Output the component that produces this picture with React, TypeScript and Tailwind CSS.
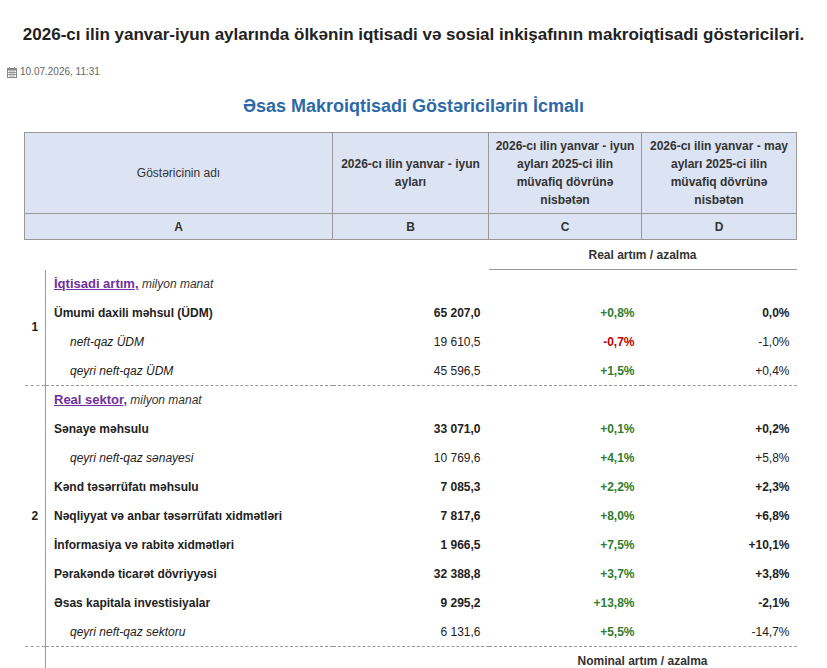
import React from "react";

type Row = {
  label: string;
  sub?: boolean;
  b: string;
  c: string;
  d: string;
};

const sectionOne: Row[] = [
  { label: "Ümumi daxili məhsul (ÜDM)", b: "65 207,0", c: "+0,8%", d: "0,0%" },
  { label: "neft-qaz ÜDM", sub: true, b: "19 610,5", c: "-0,7%", d: "-1,0%" },
  { label: "qeyri neft-qaz ÜDM", sub: true, b: "45 596,5", c: "+1,5%", d: "+0,4%" },
];

const sectionTwo: Row[] = [
  { label: "Sənaye məhsulu", b: "33 071,0", c: "+0,1%", d: "+0,2%" },
  { label: "qeyri neft-qaz sənayesi", sub: true, b: "10 769,6", c: "+4,1%", d: "+5,8%" },
  { label: "Kənd təsərrüfatı məhsulu", b: "7 085,3", c: "+2,2%", d: "+2,3%" },
  { label: "Nəqliyyat və anbar təsərrüfatı xidmətləri", b: "7 817,6", c: "+8,0%", d: "+6,8%" },
  { label: "İnformasiya və rabitə xidmətləri", b: "1 966,5", c: "+7,5%", d: "+10,1%" },
  { label: "Pərakəndə ticarət dövriyyəsi", b: "32 388,8", c: "+3,7%", d: "+3,8%" },
  { label: "Əsas kapitala investisiyalar", b: "9 295,2", c: "+13,8%", d: "-2,1%" },
  { label: "qeyri neft-qaz sektoru", sub: true, b: "6 131,6", c: "+5,5%", d: "-14,7%" },
];

const CalendarIcon = () => (
  <svg width="10" height="11" viewBox="0 0 10 11" className="shrink-0">
    <rect x="0.5" y="1.5" width="9" height="9" fill="none" stroke="#888" />
    <rect x="0.5" y="1.5" width="9" height="2" fill="#888" />
    <rect x="2" y="0" width="1" height="2.5" fill="#888" />
    <rect x="7" y="0" width="1" height="2.5" fill="#888" />
    <path d="M0.5 5.5H9.5M0.5 7.5H9.5M3 3.5V10.5M5 3.5V10.5M7 3.5V10.5" stroke="#888" strokeWidth="0.8" />
  </svg>
);

// header text with fixed line breaks, as in the source page
function Lines({ lines }: { lines: string[] }) {
  return (
    <>
      {lines.map((l) => (
        <span key={l} className="block whitespace-nowrap">
          {l}
        </span>
      ))}
    </>
  );
}

function DataRow({ row, last }: { row: Row; last?: boolean }) {
  const neg = row.c.startsWith("-");
  const edge = last ? "border-b border-dashed border-[#999]" : "";
  return (
    <tr className="h-[29px]">
      <td
        className={`pr-2 text-left ${edge} ${
          row.sub ? "pl-[24px] italic font-normal" : "pl-2 font-bold"
        }`}
      >
        {row.label}
      </td>
      <td className={`pr-2 text-right ${edge} ${row.sub ? "font-normal" : "font-bold"}`}>
        {row.b}
      </td>
      <td
        className={`pr-[7px] text-right font-bold ${edge} ${
          neg ? "text-[#c00000]" : "text-[#2e7d32]"
        }`}
      >
        {row.c}
      </td>
      <td className={`pr-[7px] text-right ${edge} ${row.sub ? "font-normal" : "font-bold"}`}>
        {row.d}
      </td>
    </tr>
  );
}

function SectionHead({ num, span, title }: { num: string; span: number; title: string }) {
  return (
    <tr className="h-[29px]">
      <td
        rowSpan={span}
        className="border-r border-b border-dashed border-[#999] text-center font-bold"
        style={{ borderRightStyle: "solid" }}
      >
        {num}
      </td>
      <td className="pl-2 text-left" colSpan={4}>
        <a href="#" className="font-bold text-[#7030a0] underline text-[13px]">
          {title},
        </a>{" "}
        <span className="italic text-[#333]">milyon manat</span>
      </td>
    </tr>
  );
}

export default function App() {
  return (
    <div className="min-h-screen bg-white font-['Liberation_Sans',Arial,sans-serif] text-[#222]">
      <h1 className="pt-[25px] text-center text-[17px] font-bold leading-[20px] text-[#222]">
        2026-cı ilin yanvar-iyun aylarında ölkənin iqtisadi və sosial inkişafının makroiqtisadi göstəriciləri.
      </h1>

      <div className="mt-[21px] flex items-center gap-[3px] pl-[7px] text-[10px] leading-[12px] text-[#666]">
        <CalendarIcon />
        <span>10.07.2026, 11:31</span>
      </div>

      <h2 className="mt-[17px] text-center text-[18px] font-bold leading-[22px] text-[#2d69a7]">
        Əsas Makroiqtisadi Göstəricilərin İcmalı
      </h2>

      <table className="mt-[15px] ml-[24px] w-[772px] table-fixed text-[12px] leading-[18px]">
        <colgroup>
          <col className="w-[21px]" />
          <col className="w-[287px]" />
          <col className="w-[156px]" />
          <col className="w-[153px]" />
          <col className="w-[155px]" />
        </colgroup>
        <thead className="bg-[#dce3f3] text-[#333]">
          <tr className="h-[81px]">
            <th colSpan={2} className="border border-[#999] px-1 font-normal">
              Göstəricinin adı
            </th>
            <th className="border border-[#999] px-1 font-bold">
              <Lines lines={["2026-cı ilin yanvar - iyun", "ayları"]} />
            </th>
            <th className="border border-[#999] px-1 font-bold">
              <Lines lines={["2026-cı ilin yanvar - iyun", "ayları 2025-ci ilin", "müvafiq dövrünə", "nisbətən"]} />
            </th>
            <th className="border border-[#999] px-1 font-bold">
              <Lines lines={["2026-cı ilin yanvar - may", "ayları 2025-ci ilin", "müvafiq dövrünə", "nisbətən"]} />
            </th>
          </tr>
          <tr className="h-[26px]">
            <th colSpan={2} className="border border-[#999] font-bold">A</th>
            <th className="border border-[#999] font-bold">B</th>
            <th className="border border-[#999] font-bold">C</th>
            <th className="border border-[#999] font-bold">D</th>
          </tr>
        </thead>
        <tbody>
          <tr className="h-[30px]">
            <td colSpan={3} />
            <td colSpan={2} className="border-b border-[#999] text-center font-bold text-[#333]">
              Real artım / azalma
            </td>
          </tr>

          <SectionHead num="1" span={sectionOne.length + 1} title="İqtisadi artım" />
          {sectionOne.map((r, i) => (
            <DataRow key={r.label} row={r} last={i === sectionOne.length - 1} />
          ))}

          <SectionHead num="2" span={sectionTwo.length + 1} title="Real sektor" />
          {sectionTwo.map((r, i) => (
            <DataRow key={r.label} row={r} last={i === sectionTwo.length - 1} />
          ))}

          <tr className="h-[29px]">
            <td className="border-r border-[#999]" />
            <td colSpan={2} />
            <td colSpan={2} className="text-center font-bold text-[#333]">
              Nominal artım / azalma
            </td>
          </tr>
        </tbody>
      </table>
    </div>
  );
}
